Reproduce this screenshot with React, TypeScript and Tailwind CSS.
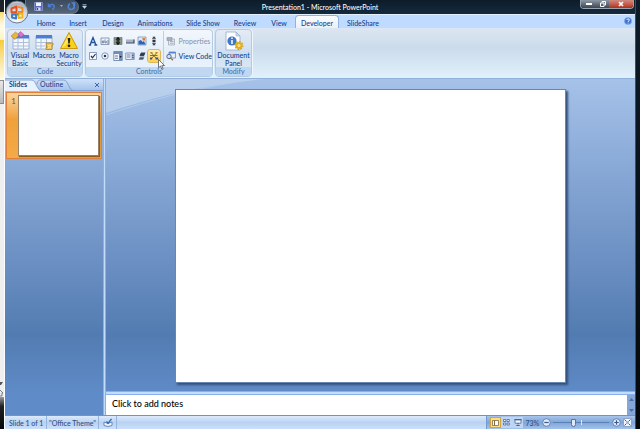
import { useState, type ReactNode } from 'react';

const tabs = [
  { name: 'Home', width: 'w-[30px]' },
  { name: 'Insert', width: 'w-[34px]' },
  { name: 'Design', width: 'w-9' },
  { name: 'Animations', width: 'w-12' },
  { name: 'Slide Show', width: 'w-12' },
  { name: 'Review', width: 'w-9' },
  { name: 'View', width: 'w-8' },
  { name: 'Developer', width: 'w-11' },
  { name: 'SlideShare', width: 'w-12' },
];

function OfficeOrb() {
  return (
    <svg viewBox="0 0 24 24" className="w-6 h-6">
      <defs>
        <radialGradient id="orb" cx="50%" cy="85%" r="90%">
          <stop offset="0" stopColor="#ffffff" />
          <stop offset="0.55" stopColor="#d3d8e0" />
          <stop offset="0.8" stopColor="#a9b0bd" />
          <stop offset="1" stopColor="#eceff4" />
        </radialGradient>
      </defs>
      <circle cx="12" cy="12" r="11" fill="url(#orb)" stroke="#52606f" strokeWidth="0.8" />
      <g fill="none" strokeWidth="1.9" strokeLinejoin="round">
        <path d="M6.500 8.500l5-2v5.500l-5 .5z" stroke="#e8501d" />
        <path d="M13 6.800l4.500 1.200v4H13" stroke="#f08a1e" />
        <path d="M7 14.500v3l4 1.200V14.200z" stroke="#3b78c9" />
        <path d="M13.500 13.800H17.500V17.500l-4 .5z" stroke="#f3b51c" />
        <path d="M12.500 13v2.500" stroke="#5da63c" />
      </g>
    </svg>
  );
}

function SaveIcon() {
  return (
    <svg viewBox="0 0 9 9" className="w-[9px] h-[9px]">
      <path d="M.5.5h8v8h-8z" fill="#5c68c4" stroke="#a9b4ee" strokeWidth="0.5" />
      <path d="M2 .5h5v3.500H2z" fill="#f3f6ff" />
      <path d="M2.500 5.500h4v3h-4z" fill="#dfe4f5" />
      <path d="M3 6h1.200v2H3z" fill="#39428f" />
    </svg>
  );
}

function UndoIcon() {
  return (
    <svg viewBox="0 0 9 9" className="w-[9px] h-[9px]" fill="none" stroke="#4a7fd6" strokeWidth="1.500">
      <path d="M1.500 4C4 1.500 8 2 7 5.500L5.500 8" />
      <path d="M1 1.500V5h3.500z" fill="#4a7fd6" strokeWidth="0.500" />
    </svg>
  );
}

function RedoIcon() {
  return (
    <svg viewBox="0 0 9 9" className="w-[9px] h-[9px]" fill="none" stroke="#4f86dc" strokeWidth="1.600">
      <path d="M3 1.800A3 3 0 1 0 6.500 2.500" />
      <path d="M4.500.5H8V4z" fill="#4f86dc" strokeWidth="0.500" />
    </svg>
  );
}

function FormGrid({ x = 2 }: { x?: number }) {
  return (
    <g>
      <path d={`M${x} 5h16v13H${x}z`} fill="#f3f7fd" stroke="#7391bd" strokeWidth="0.600" />
      <path d={`M${x} 4h16v3.500H${x}z`} fill="#4d7fd0" />
      <path d={`M${x + 5} 8v10M${x + 10.500} 8v10M${x} 11.500h16M${x} 15h16`} stroke="#aebfdb" strokeWidth="1" />
    </g>
  );
}

function VisualBasicIcon() {
  return (
    <svg viewBox="0 0 20 20" className="w-5 h-5">
      <FormGrid x={3} />
      <path d="M5.500 1L9 4 5 8.500 1 5z" fill="#e9b53a" stroke="#a87716" strokeWidth="0.500" />
      <path d="M10.500.5L14 3.500 11 6.500 8 3z" fill="#dc6fd0" stroke="#a2419a" strokeWidth="0.500" />
    </svg>
  );
}

function MacrosIcon() {
  return (
    <svg viewBox="0 0 20 20" className="w-5 h-5">
      <FormGrid x={2} />
      <path d="M12 12h7v2h-1v4.500h-6v-2h1z" fill="#f0c558" stroke="#a8781c" strokeWidth="0.700" />
      <path d="M14 14.500h3M14 16.300h3" stroke="#fff1bd" strokeWidth="0.700" />
    </svg>
  );
}

function SecurityIcon() {
  return (
    <svg viewBox="0 0 20 20" className="w-5 h-5">
      <path d="M10 1.500L18.500 17.500h-17z" fill="#fbd11b" stroke="#c99a10" strokeWidth="1" strokeLinejoin="round" />
      <path d="M10 3.500L12 8 4 16.500H3z" fill="#fff08a" opacity="0.700" />
      <path d="M8.600 7h2.800l-.7 5.500H9.300z" fill="#2b2610" />
      <circle cx="10" cy="14.800" r="1.400" fill="#2b2610" />
    </svg>
  );
}

function DocumentPanelIcon() {
  return (
    <svg viewBox="0 0 20 20" className="w-5 h-5">
      <path d="M2 1h10l4 4v14H2z" fill="#fdfeff" stroke="#8aa0c0" strokeWidth="0.700" />
      <path d="M12 1v4h4z" fill="#cfdaea" stroke="#8aa0c0" strokeWidth="0.500" />
      <circle cx="8" cy="10" r="4.600" fill="#4276c6" />
      <path d="M8 6.500v1.500M8 9v4" stroke="#ffffff" strokeWidth="1.500" />
      <circle cx="15" cy="14.500" r="2.600" fill="#f6e08a" stroke="#e3b01c" strokeWidth="2" />
      <circle cx="15" cy="14.500" r="3.900" fill="none" stroke="#d8a013" strokeWidth="1.200" strokeDasharray="1.500 1.500" />
    </svg>
  );
}

const controlIcons: { label: string; art: ReactNode }[] = [
  {
    label: 'Label',
    art: <path d="M.8 9h2.400M6.300 9h3M2 9L5 1.500 8 9M3 6.500h4" stroke="#24519a" strokeWidth="1.300" fill="none" />,
  },
  {
    label: 'Text Box',
    art: (
      <>
        <path d="M1 2h8v6.500H1z" fill="#eef3fb" stroke="#65799b" strokeWidth="0.700" />
        <path d="M2.300 6.800V5h1.500v1.800zM5 3.500v3.300h1.300V5M8 4v4" stroke="#4b5f84" strokeWidth="0.700" fill="none" />
      </>
    ),
  },
  {
    label: 'Spin Button',
    art: (
      <>
        <path d="M1 1.500h8v7H1z" fill="#8d9990" stroke="#59645f" strokeWidth="0.600" />
        <path d="M5 .8l2.500 3h-5zM5 9.200l2.500-3h-5z" fill="#111" />
        <path d="M3.500 3.500h3v3h-3z" fill="#2c3430" />
      </>
    ),
  },
  {
    label: 'Command Button',
    art: (
      <>
        <path d="M1 3.500h8v3.500H1z" fill="#a9b2c2" />
        <path d="M1 7h8V3.500" stroke="#3f4b62" strokeWidth="1.200" fill="none" />
      </>
    ),
  },
  {
    label: 'Image',
    art: (
      <>
        <path d="M1 1h8v8H1z" fill="#dfeafa" stroke="#5577ad" strokeWidth="0.600" />
        <path d="M1.500 8.500V5l2.500-1 1.500 2 1.500-1 1.500 3.500z" fill="#2e62b5" />
        <path d="M5.500 2h2.500v2.500H5.500z" fill="#d97b3c" />
      </>
    ),
  },
  {
    label: 'Scroll Bar',
    art: (
      <>
        <path d="M3 0h4v10H3z" fill="#dfe6f1" />
        <path d="M5 .3l2 2.500H3zM5 9.700l2-2.500H3zM3.500 3.800h3v2.400h-3z" fill="#2c3442" />
      </>
    ),
  },
  {
    label: 'Check Box',
    art: (
      <>
        <path d="M1.500 1.500h7v7h-7z" fill="#f8fbff" stroke="#7487a8" strokeWidth="0.800" />
        <path d="M3 4.800L4.500 6.800 7.500 3" stroke="#1c2c4c" strokeWidth="1.200" fill="none" />
      </>
    ),
  },
  {
    label: 'Option Button',
    art: (
      <>
        <circle cx="5" cy="5" r="3.200" fill="#f8fbff" stroke="#6d7fa0" strokeWidth="0.800" />
        <circle cx="5" cy="5" r="1.300" fill="#27395c" />
      </>
    ),
  },
  {
    label: 'Combo Box',
    art: (
      <>
        <path d="M.8 .5h8.400v9H.8z" fill="#f3f7fd" stroke="#4d6794" strokeWidth="0.700" />
        <path d="M.8 .5h8.400v2.500H.8zM6 3h3.200v6.500H6z" fill="#6f8db9" />
        <path d="M2 5h3M2 7.300h3" stroke="#485a7d" strokeWidth="0.800" />
        <path d="M6.500 5h2.300L7.600 7z" fill="#14233f" />
      </>
    ),
  },
  {
    label: 'List Box',
    art: (
      <>
        <path d="M.8 2h8.400v6.500H.8z" fill="#eef3fb" stroke="#5b7099" strokeWidth="0.700" />
        <path d="M6.500 2h2.700v6.500H6.500z" fill="#8fa5c8" />
        <path d="M2 4h3.500M2 6h3.500M7 4.500h1.700M7 6.500h1.700" stroke="#3d5078" strokeWidth="0.700" />
      </>
    ),
  },
  {
    label: 'Toggle Button',
    art: (
      <>
        <path d="M2.500 5L4 1.500h4.500L7 5z" fill="#39455c" />
        <path d="M1.500 9L3 5.500h4.500L6 9z" fill="#7c8aa3" />
        <path d="M3 3.300h4.500M2.500 7.300h4" stroke="#232d40" strokeWidth="0.700" />
      </>
    ),
  },
  {
    label: 'More Controls',
    art: (
      <>
        <path d="M2 1.500l5.500 6M8 1.500L2.500 7.500M1 4.500h7.500" stroke="#7c6233" strokeWidth="0.900" />
        <path d="M1 6.500h2.200v2H1zM6.500 6.500h2.700v2H6.500z" fill="#40507a" />
        <path d="M1.500 1h2v1.600h-2zM6.500 1h2v1.600h-2z" fill="#b8862e" />
      </>
    ),
  },
];

function RibbonGroup({ title, className, children }: { title: string; className: string; children: ReactNode }) {
  return (
    <section
      className={`flex flex-col rounded-sm border border-[#b4cae4] bg-gradient-to-b shadow-[1px_0_0_#eef6fd] overflow-hidden ${className}`}
    >
      <div className="flex-1 flex">{children}</div>
      <h2 className="h-[9px] text-[7px] leading-[8px] text-center text-[#4a6ea9] bg-[#bfd7f0]">{title}</h2>
    </section>
  );
}

function BigButton({ icon, lines, className }: { icon: ReactNode; lines: string[]; className: string }) {
  return (
    <button className={`flex flex-col items-center pt-px ${className}`}>
      {icon}
      {lines.map((line) => (
        <span key={line} className="text-[7px] leading-[8px] whitespace-nowrap">
          {line}
        </span>
      ))}
    </button>
  );
}

function DesktopEdge() {
  return (
    <div className="w-[5px] shrink-0 flex flex-col bg-[#efefef] border-r border-[#fbfdff]">
      <div className="h-3 bg-[#1c2228]" />
      <div className="h-7 bg-gradient-to-b from-[#f7dc6c] via-[#fffbea] to-[#fdf3c4]" />
      <div className="h-10 bg-gradient-to-b from-[#f6cb2c] to-[#fffbe6]" />
      <div className="h-6 border border-l-0 border-[#8d8d8d] bg-gradient-to-b from-[#e8e8e8] to-[#b9b9b9]" />
      <div className="flex-1" />
      <svg viewBox="0 0 4 18" className="w-1 h-[18px]">
        <path d="M0 3h3L1 6H0z" fill="#555" />
        <path d="M0 11l3 3H2v3H0" fill="#dfeef8" stroke="#666" strokeWidth="0.800" />
      </svg>
      <div className="h-8 bg-gradient-to-b from-[#9a9a9a] via-[#202020] via-30% to-[#05080b]" />
    </div>
  );
}

function TitleBar() {
  return (
    <header className="relative h-[14px] flex justify-between bg-gradient-to-b from-[#0d1c2a] to-[#142a3d]">
      <button aria-label="Office Button" className="absolute left-0 top-0 z-10">
        <OfficeOrb />
      </button>
      <div className="flex items-start gap-[3px]">
        <div className="ml-5 h-[14px] w-[54px] pl-2 flex items-center gap-1 rounded-r-full border border-t-0 border-[#67788c] bg-gradient-to-b from-[#3b4a5c] to-[#55657a]">
          <button aria-label="Save"><SaveIcon /></button>
          <button aria-label="Undo"><UndoIcon /></button>
          <svg viewBox="0 0 3 3" className="w-[3px] h-[3px]"><path d="M0 0h3L1.500 2z" fill="#9fb2d0" /></svg>
          <button aria-label="Redo"><RedoIcon /></button>
        </div>
        <button aria-label="Customize Quick Access Toolbar" className="pt-1">
          <svg viewBox="0 0 5 5" className="w-[5px] h-[5px]">
            <path d="M.5.500h4M.5 2h4L2.500 4.500z" fill="#c8d2df" stroke="#c8d2df" strokeWidth="0.600" />
          </svg>
        </button>
      </div>
      <h1 className="absolute inset-x-0 text-center text-[7px] leading-[14px] text-white pointer-events-none">
        Presentation1 - Microsoft PowerPoint
      </h1>
      <div className="mr-px flex h-[9px] rounded-b-sm border border-t-0 border-[#98a3af] overflow-hidden">
        <button aria-label="Minimize" className="w-4 grid place-items-center bg-gradient-to-b from-[#8e99a4] to-[#3a4754]">
          <span className="w-[6px] h-[2px] bg-white" />
        </button>
        <button aria-label="Restore" className="w-3 grid place-items-center bg-gradient-to-b from-[#8e99a4] to-[#3a4754]">
          <svg viewBox="0 0 6 6" className="w-[6px] h-[6px]" fill="none" stroke="#fff">
            <path d="M.5 2h3.500v3.500H.5zM2 1.500V.5h3.500V4H4.500" />
          </svg>
        </button>
        <button aria-label="Close" className="w-6 grid place-items-center bg-gradient-to-b from-[#d18a80] to-[#b32c16]">
          <svg viewBox="0 0 6 6" className="w-[6px] h-[6px]">
            <path d="M1 1l4 4M5 1L1 5" stroke="#fff" strokeWidth="1.600" />
          </svg>
        </button>
      </div>
    </header>
  );
}

function TabBar({ active, onSelect }: { active: string; onSelect: (name: string) => void }) {
  return (
    <nav className="h-[14px] flex items-end justify-between border-t border-[#e3f0fe] bg-[#bfdbff]">
      <div role="tablist" className="ml-[26px] flex h-full">
        {tabs.map((tab) => (
          <button
            key={tab.name}
            role="tab"
            aria-selected={tab.name === active}
            onClick={() => onSelect(tab.name)}
            className={`h-full border border-b-0 text-[7px] leading-[14px] whitespace-nowrap flex justify-center ${tab.width} ${
              tab.name === active
                ? 'rounded-t-sm border-[#90b2de] bg-gradient-to-b from-[#fbfdff] to-[#e9f0f8]'
                : 'border-transparent'
            }`}
          >
            {tab.name}
          </button>
        ))}
      </div>
      <button aria-label="Help" className="mr-[3px] mb-[3px]">
        <svg viewBox="0 0 8 8" className="w-2 h-2">
          <circle cx="4" cy="4" r="3.600" fill="#3e74d0" stroke="#8eb0e5" strokeWidth="0.700" />
          <path d="M2.800 3c0-1.500 2.600-1.500 2.600 0C5.400 4 4 4 4 5M4 5.700v.8" stroke="#fff" strokeWidth="0.900" fill="none" />
        </svg>
      </button>
    </nav>
  );
}

function Ribbon() {
  return (
    <div className="h-[51px] px-[2px] py-px flex gap-[2px] border-b border-[#8fb0d9] bg-gradient-to-b from-[#dde6f2] via-[#cbdbeb] via-40% to-[#e0f1fc]">
      <RibbonGroup title="Code" className="w-[76px] from-[#e3ebf5] via-[#cfdff0] to-[#dcecf9]">
        <BigButton icon={<VisualBasicIcon />} lines={['Visual', 'Basic']} className="w-6" />
        <BigButton icon={<MacrosIcon />} lines={['Macros']} className="w-6" />
        <BigButton icon={<SecurityIcon />} lines={['Macro', 'Security']} className="w-[26px]" />
      </RibbonGroup>
      <RibbonGroup title="Controls" className="w-[128px] from-[#f2f7fc] via-[#e4eef9] to-[#eaf5fe]">
        <div className="grid grid-cols-6 w-[75px] py-[3px] pl-px place-items-center">
          {controlIcons.map((control) => (
            <button
              key={control.label}
              aria-label={control.label}
              className={`p-px ${
                control.label === 'More Controls'
                  ? 'rounded-xs outline outline-[#d9b95c] bg-gradient-to-b from-[#fff0b8] to-[#ffd03f]'
                  : ''
              }`}
            >
              <svg viewBox="0 0 10 10" className="w-[10px] h-[10px]">{control.art}</svg>
            </button>
          ))}
        </div>
        <div className="ml-[3px] my-px pl-[2px] py-[2px] flex-1 flex flex-col justify-around border-l border-[#bfd0e6]">
          <button disabled className="flex items-center gap-[2px] text-[7px] leading-[8px] text-[#8d97a8]">
            <svg viewBox="0 0 10 10" className="w-[10px] h-[10px] shrink-0">
              <path d="M2.500 3h6v6h-6z" fill="#e5e8ee" stroke="#9da5b4" strokeWidth="0.700" />
              <path d="M4 5.500h3.500M4 7.300h3.500M1 1.500h5v3H1z" fill="#a9b0bd" stroke="#949cac" strokeWidth="0.700" />
            </svg>
            Properties
          </button>
          <button className="flex items-center gap-[2px] text-[7px] leading-[8px] whitespace-nowrap">
            <svg viewBox="0 0 10 10" className="w-[10px] h-[10px] shrink-0">
              <path d="M3 1h6.500v6H3z" fill="#e7f0fc" stroke="#5d7aae" strokeWidth="0.700" />
              <path d="M3 1h6.500v1.500H3z" fill="#5585d0" />
              <circle cx="3" cy="5.500" r="2.200" fill="#cde0f8" stroke="#475f8b" strokeWidth="0.900" />
              <path d="M4.500 7l2.500 2.300" stroke="#a07a35" strokeWidth="1.300" />
            </svg>
            View Code
          </button>
        </div>
      </RibbonGroup>
      <RibbonGroup title="Modify" className="w-[37px] from-[#e3ebf5] via-[#cfdff0] to-[#dcecf9]">
        <BigButton icon={<DocumentPanelIcon />} lines={['Document', 'Panel']} className="w-full" />
      </RibbonGroup>
      <svg viewBox="0 0 7 11" className="absolute left-[153px] top-[59px] z-20 w-[7px] h-[11px]">
        <path d="M.5.5v8.300l2-1.800 1.300 3.300 1.300-.5L3.800 6.600h2.700z" fill="#fff" stroke="#3b3f48" strokeWidth="0.700" />
      </svg>
    </div>
  );
}

function SlidesPane() {
  return (
    <aside className="w-[98px] shrink-0 flex flex-col">
      <div className="relative h-3 flex items-center justify-between border-b border-[#7fa3d6] bg-gradient-to-b from-[#d0e2f8] to-[#a5c3ec] text-[7px] leading-[11px]">
        <svg viewBox="0 0 80 12" className="absolute left-0 top-0 w-20 h-3" fill="none">
          <path d="M0 12V1h27c4 0 5 11 10 11z" fill="#e8f2fd" />
          <path d="M0 1h27c4 0 5 11 10 11M32 5c1-4 2-4 4-4h23c4 0 5 11 10 11" stroke="#6f93c8" strokeWidth="0.800" />
        </svg>
        <div role="tablist" className="relative flex gap-[13px] pl-1">
          <button role="tab" aria-selected="true" className="font-bold text-[#15428b]">Slides</button>
          <button role="tab" aria-selected="false">Outline</button>
        </div>
        <button aria-label="Close pane" className="mr-1">
          <svg viewBox="0 0 4 4" className="w-1 h-1"><path d="M0 0l4 4M4 0L0 4" stroke="#3b64a5" /></svg>
        </button>
      </div>
      <button
        aria-label="Slide 1"
        className="mx-px mt-px flex items-start border border-[#e07f3c] bg-gradient-to-b from-[#fbd49c] via-[#f0a13a] via-40% to-[#f4aa48] p-[2px]"
      >
        <span className="w-[9px] pt-[2px] text-[7px] leading-[8px] font-bold text-[#8d6a3a]">1</span>
        <span className="flex-1 aspect-[4/3] border border-[#96826a] bg-white shadow-[1px_1px_1px_#8a5c1e]" />
      </button>
    </aside>
  );
}

function StatusBar() {
  const [zoom, setZoom] = useState(73);

  return (
    <footer className="h-[14px] shrink-0 flex text-[7px] leading-[14px] text-[#2c4f86] border-t border-[#6d94cd] bg-gradient-to-b from-[#dceafb] via-[#b9d2f2] to-[#cbe0fa]">
      <span className="w-[42px] pl-1 border-r border-[#96b5de] whitespace-nowrap">Slide 1 of 1</span>
      <span className="w-[52px] text-center border-r border-[#96b5de] whitespace-nowrap">"Office Theme"</span>
      <button aria-label="Spelling" className="w-[18px] grid place-items-center border-r border-[#96b5de]">
        <svg viewBox="0 0 10 9" className="w-[10px] h-[9px]">
          <path d="M1 4l4 1.500L9 4v3.500L5 8.500 1 7.500z" fill="#eef5ff" stroke="#4d74ae" strokeWidth="0.800" />
          <path d="M3.500 3.500L5 5.500 8.500.8" stroke="#3767ae" strokeWidth="1.300" fill="none" />
        </svg>
      </button>
      <div className="flex-1" />
      <div className="w-[149px] pl-[3px] pr-[3px] flex items-center justify-between border-l border-[#7399cf] bg-gradient-to-b from-[#a9c5ec] via-[#7fa5d8] to-[#a3c2ec]">
        <div className="flex items-center">
          <button aria-label="Normal" className="w-[11px] h-[11px] grid place-items-center border border-[#d3a43e] bg-[#ffdf86]">
            <svg viewBox="0 0 7 6" className="w-[7px] h-[6px]">
              <path d="M.5.5h6v5h-6z" fill="#fff" stroke="#7f6840" strokeWidth="0.800" />
              <path d="M2.500.5v5" stroke="#7f6840" />
            </svg>
          </button>
          <button aria-label="Slide Sorter" className="w-[11px] h-[11px] grid place-items-center bg-[#bdd5f5]">
            <svg viewBox="0 0 7 7" className="w-[7px] h-[7px]" fill="#f6faff" stroke="#4c6594" strokeWidth="0.800">
              <path d="M.5.5h2.300v2H.5zM4 .5h2.300v2H4zM.5 4h2.300v2H.5zM4 4h2.300v2H4z" />
            </svg>
          </button>
          <button aria-label="Slide Show" className="w-[11px] h-[11px] grid place-items-center bg-[#bdd5f5]">
            <svg viewBox="0 0 8 7" className="w-2 h-[7px]">
              <path d="M1 .8h6v3.400H1z" fill="#f6faff" stroke="#4c6594" strokeWidth="0.800" />
              <path d="M.3.700h7.400M4 4v1.500M2.300 6.500h3.400" stroke="#3f5580" strokeWidth="0.900" />
            </svg>
          </button>
        </div>
        <span className="w-[14px] whitespace-nowrap">{zoom}%</span>
        <button aria-label="Zoom Out" onClick={() => setZoom(Math.max(10, zoom - 10))}>
          <svg viewBox="0 0 9 9" className="w-[9px] h-[9px]">
            <circle cx="4.500" cy="4.500" r="3.800" fill="#dfebfb" stroke="#5473a4" strokeWidth="0.800" />
            <path d="M2.300 4.500h4.400" stroke="#3d5785" strokeWidth="1.200" />
          </svg>
        </button>
        <input
          type="range"
          aria-label="Zoom"
          min="10"
          max="190"
          value={zoom}
          onChange={(e) => setZoom(parseInt(e.target.value))}
          className="w-14 h-2 appearance-none bg-[linear-gradient(#dbe8fa,#dbe8fa),linear-gradient(#5c7fb4,#5c7fb4)] bg-[length:1px_5px,100%_1px] bg-no-repeat bg-center [&::-webkit-slider-thumb]:appearance-none [&::-webkit-slider-thumb]:w-[5px] [&::-webkit-slider-thumb]:h-2 [&::-webkit-slider-thumb]:rounded-b-full [&::-webkit-slider-thumb]:border [&::-webkit-slider-thumb]:border-[#5473a4] [&::-webkit-slider-thumb]:bg-[#dfebfb]"
        />
        <button aria-label="Zoom In" onClick={() => setZoom(Math.min(190, zoom + 10))}>
          <svg viewBox="0 0 9 9" className="w-[9px] h-[9px]">
            <circle cx="4.500" cy="4.500" r="3.800" fill="#dfebfb" stroke="#5473a4" strokeWidth="0.800" />
            <path d="M2.300 4.500h4.400M4.500 2.300v4.400" stroke="#3d5785" strokeWidth="1.200" />
          </svg>
        </button>
        <button aria-label="Fit to window">
          <svg viewBox="0 0 9 9" className="w-[9px] h-[9px]">
            <path d="M.5.500h8v8h-8z" fill="#f0f6ff" stroke="#6b86b2" strokeWidth="0.600" />
            <path d="M1.500 1.500l2 2M7.500 1.500l-2 2M1.500 7.500l2-2M7.500 7.500l-2-2" stroke="#3d5785" strokeWidth="1" />
            <path d="M3.500 3.500h2v2h-2z" fill="#8aa4cd" />
          </svg>
        </button>
      </div>
    </footer>
  );
}

export default function App() {
  const [activeTab, setActiveTab] = useState('Developer');
  const [notes, setNotes] = useState('');

  return (
    <div className="h-screen flex overflow-hidden bg-[#0c141b] font-['Lato','Open_Sans',sans-serif] font-medium text-[#15428b]">
      <DesktopEdge />
      <div className="relative flex-1 min-w-0 flex flex-col">
        <TitleBar />
        <TabBar active={activeTab} onSelect={setActiveTab} />
        <Ribbon />
        <main className="relative flex-1 min-h-0 flex bg-[linear-gradient(#a6c2e9,#8babd8_24%,#678cc0_58%,#527cb1_76%,#5f8bc8_94%)]">
          <SlidesPane />
          <div className="w-[3px] shrink-0 border-x border-[#87b1eb] bg-[#c3dcfb]" />
          <div className="flex-1 min-w-0 flex flex-col">
            <div className="relative flex-1 min-h-0 pt-[10px]">
              <svg viewBox="0 0 160 36" className="absolute left-0 top-0 w-40 h-9">
                <path d="M0 0h160C100 5 50 17 0 34z" fill="#c8dbf0" opacity="0.600" />
                <path d="M0 36C50 19 90 9 150 0" fill="none" stroke="#bcd4f0" strokeWidth="1" opacity="0.600" />
              </svg>
              <article aria-label="Slide" className="relative mx-auto w-[74%] aspect-[4/3] bg-white border border-[#6786b2] shadow-[2px_2px_2px_#34507c]" />
            </div>
            <div className="h-1 shrink-0 border-y border-[#87b1eb] bg-[#c3dcfb]" />
            <div className="h-5 shrink-0 flex bg-white">
              <textarea
                aria-label="Notes"
                placeholder="Click to add notes"
                value={notes}
                onChange={(e) => setNotes(e.target.value)}
                className="flex-1 resize-none overflow-hidden px-[6px] pt-px font-['Lato',sans-serif] text-[9px] leading-[16px] text-black placeholder:text-black focus:outline-none"
              />
              <div className="w-2 flex flex-col items-center justify-between py-[3px] bg-[#85a6d8]">
                <svg viewBox="0 0 5 3" className="w-[5px] h-[3px]"><path d="M0 3L2.500 0 5 3z" fill="#4e6ea3" /></svg>
                <svg viewBox="0 0 5 3" className="w-[5px] h-[3px]"><path d="M0 0l2.500 3L5 0z" fill="#4e6ea3" /></svg>
              </div>
            </div>
          </div>
        </main>
        <StatusBar />
      </div>
      <div className="w-[5px] shrink-0 border-l border-[#35506b] bg-gradient-to-b from-[#0d1c2a] to-[#06090c]" />
    </div>
  );
}
